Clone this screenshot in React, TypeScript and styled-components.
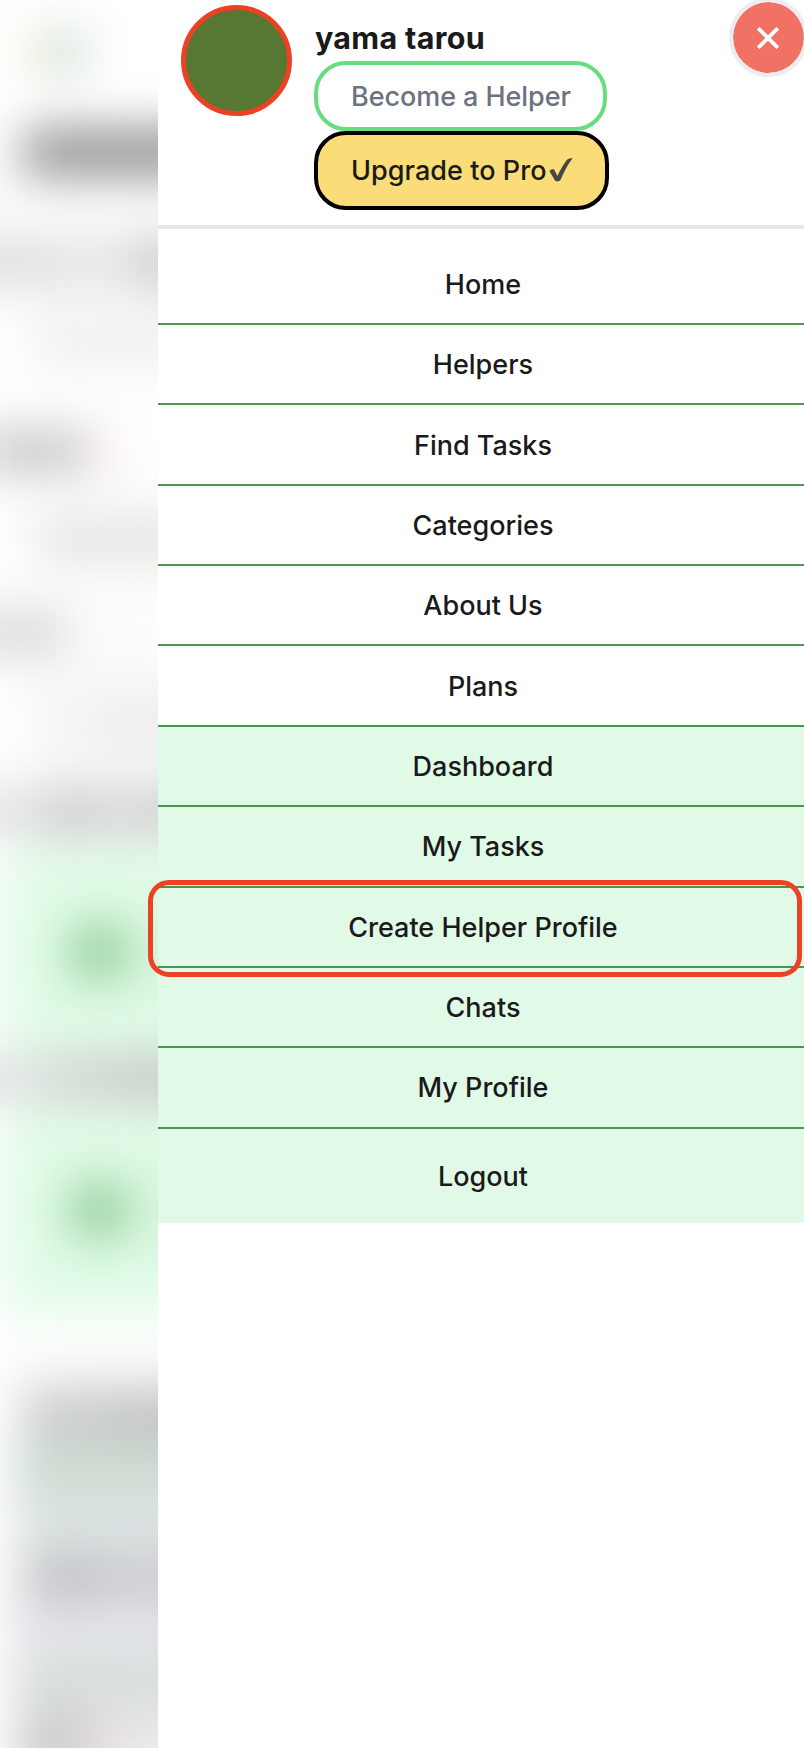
import React from "react";
import styled, { createGlobalStyle } from "styled-components";

const Global = createGlobalStyle`
  * { box-sizing: border-box; }
  body { margin: 0; background: #fff; font-family: Inter, "Liberation Sans", sans-serif; color: #1a1a1a; }
`;

const Screen = styled.div`
  position: relative;
  display: flex;
  width: 804px;
  height: 1748px;
  overflow: hidden;
  background: #fff;
`;

const Behind = styled.div`
  flex: 0 0 158px;
  overflow: hidden;
`;

const BlurredPage = styled.div`
  width: 260px;
  height: 1840px;
  filter: blur(24px);
  display: flex;
  flex-direction: column;
`;

const Band = styled.div<{ $h: number; $bg?: string; $left?: number }>`
  flex: 0 0 ${(p) => p.$h}px;
  margin-left: ${(p) => p.$left ?? 0}px;
  background: ${(p) => p.$bg ?? "transparent"};
  display: flex;
  align-items: center;
`;

const Smudge = styled.div<{ $w: number; $h: number; $bg: string; $ml?: number; $round?: boolean }>`
  flex: none;
  width: ${(p) => p.$w}px;
  height: ${(p) => p.$h}px;
  margin-left: ${(p) => p.$ml ?? 0}px;
  background: ${(p) => p.$bg};
  border-radius: ${(p) => (p.$round ? "50%" : "0")};
`;

const Drawer = styled.aside`
  flex: 1;
  min-width: 0;
  background: #fff;
`;

const Header = styled.header`
  display: flex;
  height: 229px;
  padding: 4px 0 0 23px;
  border-bottom: 4px solid #e5e7eb;
`;

const Avatar = styled.div`
  flex: none;
  width: 111px;
  height: 111px;
  margin-top: 0.5px;
  border: 5px solid #ed4126;
  border-radius: 50%;
  background: #567832;
`;

const Account = styled.div`
  display: flex;
  flex-direction: column;
  align-items: flex-start;
  margin-left: 22px;
`;

const Name = styled.h1`
  margin: 0 0 0 1px;
  height: 57px;
  padding-top: 15px;
  font-size: 30.5px;
  line-height: 38px;
  font-weight: 700;
  letter-spacing: 0.3px;
  white-space: nowrap;
`;

const Pill = styled.button<{ $pro?: boolean }>`
  display: flex;
  align-items: center;
  width: ${(p) => (p.$pro ? 295 : 293)}px;
  height: ${(p) => (p.$pro ? 79 : 70)}px;
  padding: 0 0 0 33px;
  border: 4px solid ${(p) => (p.$pro ? "#000" : "#66dd80")};
  border-radius: 32px;
  background: ${(p) => (p.$pro ? "#fadc78" : "#fff")};
  color: ${(p) => (p.$pro ? "#1a1a1a" : "#6b7280")};
  font-family: inherit;
  font-size: 27px;
  font-weight: ${(p) => (p.$pro ? 500 : 450)};
  letter-spacing: ${(p) => (p.$pro ? 0.05 : -0.06)}px;
  white-space: nowrap;
`;

const Check = styled.svg`
  flex: none;
  width: 24px;
  height: 24px;
  margin: 0 0 2px 2px;
`;

const Close = styled.button`
  position: absolute;
  top: -2px;
  left: 729px;
  width: 79px;
  height: 79px;
  padding: 0 1px 0 0;
  border: 4px solid #ededf0;
  border-radius: 50%;
  background: #f17165;
  background-clip: padding-box;
  display: grid;
  place-items: center;
`;

const Menu = styled.nav`
  padding-top: 15.7px;
`;

const Item = styled.a<{ $tint?: boolean; $last?: boolean }>`
  display: flex;
  align-items: center;
  justify-content: center;
  height: ${(p) => (p.$last ? 94.4 : 80.36)}px;
  padding: 1px 0 0 4px;
  border-bottom: ${(p) => (p.$last ? "0" : "2px solid #48984c")};
  background: ${(p) => (p.$tint ? "#e1fae8" : "#fff")};
  font-size: 27px;
  font-weight: 500;
  letter-spacing: 0;
`;

const Highlight = styled.div`
  position: absolute;
  left: 148px;
  top: 880px;
  width: 654px;
  height: 97px;
  border: 5px solid #ed4126;
  border-radius: 21px;
`;

const items = [
  "Home", "Helpers", "Find Tasks", "Categories", "About Us", "Plans",
  "Dashboard", "My Tasks", "Create Helper Profile", "Chats", "My Profile", "Logout",
];

export default function App() {
  return (
    <>
      <Global />
      <Screen>
        <Behind>
          <BlurredPage>
            <Band $h={28} />
            <Band $h={50}>
              <Smudge $w={20} $h={44} $bg="#f1e6cf" $ml={30} />
              <Smudge $w={22} $h={50} $bg="#c9dfcc" />
              <Smudge $w={20} $h={44} $bg="#ddebf3" />
            </Band>
            <Band $h={52} />
            <Band $h={44} $left={23} $bg="#8a8a8a" />
            <Band $h={68} $left={-60} $bg="#fbfbfb" />
            <Band $h={42} $left={-60}>
              <Smudge $w={122} $h={38} $bg="#d8d8d8" />
              <Smudge $w={72} $h={38} $bg="#e1e1e1" />
              <Smudge $w={126} $h={42} $bg="#c4c4c4" />
            </Band>
            <Band $h={30} $bg="#fbfbfb" />
            <Band $h={54} $left={34} $bg="#f0f0f0" />
            <Band $h={62} />
            <Band $h={42} $left={-20}>
              <Smudge $w={108} $h={40} $bg="#c2c2c2" />
              <Smudge $w={20} $h={30} $bg="#fae4e0" $ml={8} />
            </Band>
            <Band $h={43} $bg="#fdfdfd" />
            <Band $h={46} $left={36} $bg="#e2e5e2" />
            <Band $h={50} $bg="#fdfdfc" />
            <Band $h={44} $left={-30}>
              <Smudge $w={98} $h={42} $bg="#d6d6d6" />
              <Smudge $w={26} $h={30} $bg="#fdf1ef" $ml={40} />
            </Band>
            <Band $h={38} $left={20} $bg="#fafafa" />
            <Band $h={62} $left={38}>
              <Smudge $w={62} $h={60} $bg="#f2f3f2" />
              <Smudge $w={160} $h={60} $bg="#ededed" />
            </Band>
            <Band $h={34} $left={10} $bg="#f9faf9" />
            <Band $h={44} $left={-60}>
              <Smudge $w={104} $h={38} $bg="#dedede" />
              <Smudge $w={54} $h={42} $bg="#c6c6c6" />
              <Smudge $w={34} $h={42} $bg="#d6d6d6" />
              <Smudge $w={128} $h={42} $bg="#cacaca" />
            </Band>
            <Band $h={18} $left={8} $bg="#f0f7f1" />
            <Band $h={202} $left={4} $bg="#dffbe6">
              <Smudge $w={60} $h={60} $bg="#8bc993" $ml={65} $round />
              <Smudge $w={90} $h={80} $bg="#d8f4dd" $ml={14} />
            </Band>
            <Band $h={4} $bg="#f1f8f3" />
            <Band $h={42} $left={-50}>
              <Smudge $w={100} $h={36} $bg="#dcdcdc" />
              <Smudge $w={70} $h={40} $bg="#cccccc" />
              <Smudge $w={140} $h={42} $bg="#c4c4c4" />
            </Band>
            <Band $h={10} $left={4} $bg="#eaf5ed" />
            <Band $h={202} $left={4} $bg="#dffbe6">
              <Smudge $w={60} $h={60} $bg="#8bc993" $ml={65} $round />
              <Smudge $w={90} $h={80} $bg="#d8f4dd" $ml={14} />
            </Band>
            <Band $h={64} $bg="#fdfffd" />
            <Band $h={18} $left={12} $bg="#e9e9ee" />
            <Band $h={44} $left={24}>
              <Smudge $w={86} $h={44} $bg="#cacacd" />
              <Smudge $w={150} $h={44} $bg="#c0c1c2" />
            </Band>
            <Band $h={53} $left={14} $bg="#cddbd0" />
            <Band $h={68} $left={14} $bg="#dce3e3" />
            <Band $h={40} $left={24}>
              <Smudge $w={70} $h={40} $bg="#babbbd" />
              <Smudge $w={170} $h={40} $bg="#c8c8cb" />
            </Band>
            <Band $h={54} $left={8} $bg="#e5e5ea" />
            <Band $h={62} $left={14} $bg="#d8dfdc" />
            <Band $h={66} $left={18}>
              <Smudge $w={62} $h={66} $bg="#c9c9cd" />
              <Smudge $w={40} $h={66} $bg="#e8dddc" />
              <Smudge $w={140} $h={66} $bg="#eaeaed" />
            </Band>
          </BlurredPage>
        </Behind>
        <Drawer>
          <Header>
            <Avatar />
            <Account>
              <Name>yama tarou</Name>
              <Pill>Become a Helper</Pill>
              <Pill $pro>
                Upgrade to Pro
                <Check viewBox="0 0 24 24" aria-hidden="true">
                  <path d="M0.5 13.2C2.2 11.2 4.4 10.5 5.1 11.6L8.4 18C12 10.5 15.5 4.3 18.6 1.2C20 .2 22 0 23.6.3C18.8 6.3 15.2 14 11.7 21.4C10.8 23.5 7.3 24.2 5.8 22.2Z" fill="#464646" />
                </Check>
              </Pill>
            </Account>
          </Header>
          <Menu>
            {items.map((label, i) => (
              <Item key={label} $tint={i > 5} $last={i === items.length - 1}>
                {label}
              </Item>
            ))}
          </Menu>
        </Drawer>
        <Close aria-label="Close">
          <svg width="22" height="22" viewBox="0 0 22 22">
            <path d="M1.2 1.2L20.8 20.8M20.8 1.2L1.2 20.8" stroke="#fff" strokeWidth="3.8" fill="none" />
          </svg>
        </Close>
        <Highlight />
      </Screen>
    </>
  );
}
